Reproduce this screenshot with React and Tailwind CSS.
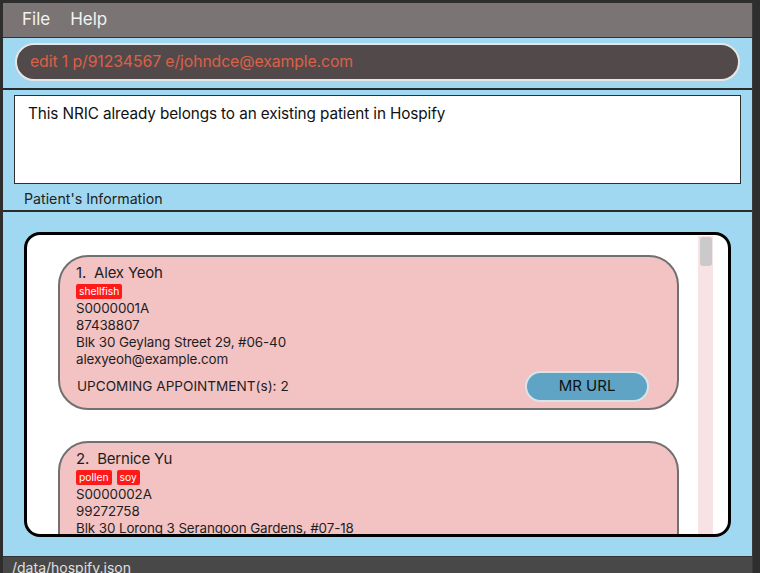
import React from 'react';

const patients = [
  {
    id: 1,
    name: 'Alex Yeoh',
    tags: ['shellfish'],
    nric: 'S0000001A',
    phone: '87438807',
    address: 'Blk 30 Geylang Street 29, #06-40',
    email: 'alexyeoh@example.com',
    appts: 2,
  },
  {
    id: 2,
    name: 'Bernice Yu',
    tags: ['pollen', 'soy'],
    nric: 'S0000002A',
    phone: '99272758',
    address: 'Blk 30 Lorong 3 Serangoon Gardens, #07-18',
    email: 'berniceyu@example.com',
    appts: 1,
  },
];

const PatientCard = ({ p }) => (
  <div className="h-[155px] w-[621px] shrink-0 rounded-[30px] border-2 border-[#707070] bg-[#f3c2c3] pl-[16px] pr-[28px] pt-[6px] text-[#1e1e1e]">
    <div className="text-[15px] leading-[20px] tracking-[-0.2px]">
      {p.id}.&nbsp;&nbsp;{p.name}
    </div>
    <div className="mt-[1px] flex gap-[5px]">
      {p.tags.map((t) => (
        <span key={t} className="rounded-[2px] bg-[#ff1a1a] px-[3px] text-[10.3px] leading-[15px] text-white">
          {t}
        </span>
      ))}
    </div>
    <div className="mt-[1px] text-[13.4px] leading-[17px] tracking-[-0.1px]">
      <div>{p.nric}</div>
      <div>{p.phone}</div>
      <div>{p.address}</div>
      <div>{p.email}</div>
    </div>
    <div className="mt-[3px] flex items-center justify-between">
      <span className="ml-[1px] text-[13.6px]">UPCOMING APPOINTMENT(s): {p.appts}</span>
      <button className="h-[31px] w-[124px] rounded-full border-2 border-[#d8e4ea] bg-[#5fa3c5] text-[15px] text-[#111]">
        MR URL
      </button>
    </div>
  </div>
);

export default function App() {
  return (
    <div
      className="flex h-[573px] w-[760px] overflow-hidden bg-[#2e2e2e] pl-[3px] pt-[3px]"
      style={{ fontFamily: 'Inter, "Noto Sans", sans-serif' }}
    >
      <div className="flex w-[750px] flex-col border-r border-[#3a3a3a]">
        {/* menu bar */}
        <div className="flex h-[35px] shrink-0 items-center gap-[20px] border-b border-[#333] bg-[#7a7574] pl-[19px] text-[17px] text-[#f2f2f2]">
          <span>File</span>
          <span>Help</span>
        </div>

        <div className="flex flex-1 flex-col bg-[#a1d8f1]">
          {/* command box */}
          <div className="px-[12px] pt-[5px]">
            <div className="flex h-[38px] items-center rounded-full border-2 border-[#e6e6e6] bg-[#524a4a] pl-[13px] text-[15.8px] tracking-[-0.1px] text-[#dc6048]">
              edit 1 p/91234567 e/johndce@example.com
            </div>
          </div>
          <div className="mt-[7px] h-[2px] bg-[#2b2b2b]" />

          {/* result box */}
          <div className="mx-[11px] mt-[5px] h-[89px] border border-[#2f2f2f] bg-white pl-[13px] pt-[7px] text-[15.3px] tracking-[-0.1px] text-[#111]">
            This NRIC already belongs to an existing patient in Hospify
          </div>

          <div className="h-[26px] pl-[21px] pt-[5px] text-[14.2px] leading-[20px] text-[#222]">
            Patient's Information
          </div>
          <div className="h-[2px] bg-[#2b2b2b]" />

          {/* list panel */}
          <div className="mx-[21px] mt-[20px] flex h-[305px] overflow-hidden rounded-[16px] border-[3px] border-black bg-white">
            <div className="flex flex-1 flex-col gap-[31px] overflow-hidden pl-[31px] pt-[20px]">
              {patients.map((p) => (
                <PatientCard key={p.id} p={p} />
              ))}
            </div>
            <div className="relative mr-[15px] mt-[1px] w-[15px] bg-[#f8e3e4]">
              <div className="absolute left-[2px] right-[1px] top-[1px] h-[29px] rounded-[3px] bg-[#cacaca]" />
            </div>
          </div>
          <div className="flex-1" />

          {/* status bar */}
          <div className="h-[17px] shrink-0 overflow-hidden border-t border-[#333] bg-[#484848] pl-[9px] pt-[2px] text-[14px] leading-[18px] text-[#e0e0e0]">
            /data/hospify.json
          </div>
        </div>
      </div>
    </div>
  );
}
